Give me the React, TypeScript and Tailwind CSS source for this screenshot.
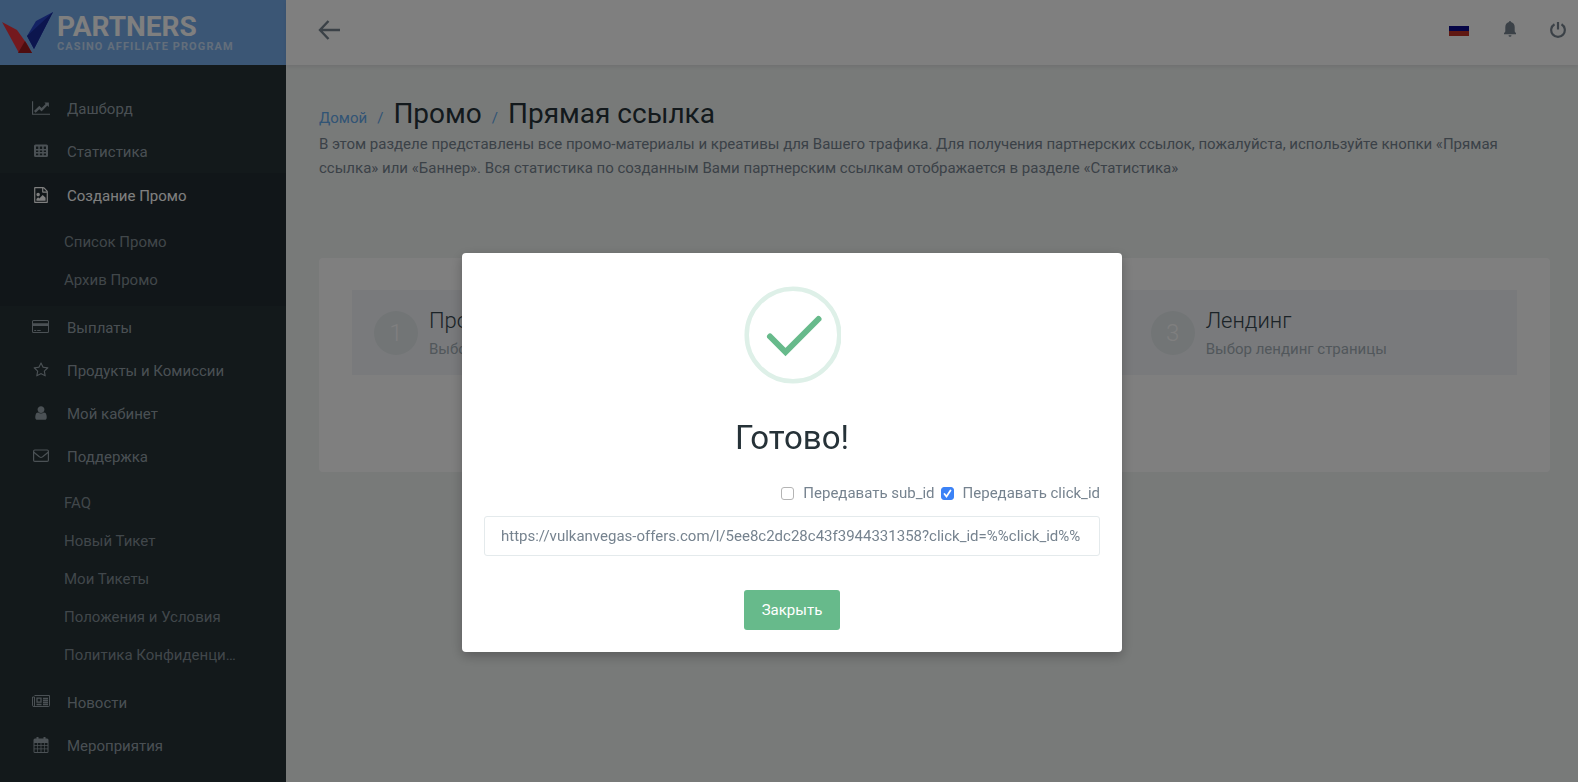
import type { ReactNode } from "react";

type IconProps = { children: ReactNode; viewBox?: string; className?: string };

function Icon({ children, viewBox = "0 0 1792 1792", className = "size-4" }: IconProps) {
  return (
    <svg viewBox={viewBox} className={className} fill="currentColor" aria-hidden="true">
      {children}
    </svg>
  );
}

const icons = {
  chart: (
    <Icon viewBox="0 0 2048 1792" className="h-4 w-[18px]">
      <path d="M2048 1536v128H0V128h128v1408h1920zM1920 288v435q0 21-19.500 29.500T1865 745l-121-121-633 633q-10 10-23 10t-23-10L832 1024l-416 416-192-192 585-585q10-10 23-10t23 10l233 233 464-464-121-121q-16-16-7.500-35.500T1453 256h435q14 0 23 9t9 23z" />
    </Icon>
  ),
  grid: (
    <Icon viewBox="0 0 16 16">
      <path
        fillRule="evenodd"
        d="M2.500 1.500h11A1.500 1.500 0 0 1 15 3v9.500a1.500 1.500 0 0 1-1.500 1.500h-11A1.500 1.500 0 0 1 1 12.500V3a1.500 1.500 0 0 1 1.500-1.500zM3 3.500V6h2.300V3.500zm3.800 0V6h2.400V3.500zm3.900 0V6H13V3.500zM3 7.500V9h2.300V7.500zm3.800 0V9h2.400V7.500zm3.900 0V9H13V7.500zM3 10.400v1.900h2.300v-1.900zm3.800 0v1.900h2.400v-1.900zm3.900 0v1.900H13v-1.900z"
      />
    </Icon>
  ),
  image: (
    <Icon>
      <path d="M1596 380q28 28 48 76t20 88v1152q0 40-28 68t-68 28H224q-40 0-68-28t-28-68V96q0-40 28-68t68-28h896q40 0 88 20t76 48zm-444-244v376h376q-10-29-22-41l-313-313q-12-12-41-22zm384 1528V640h-416q-40 0-68-28t-28-68V128H256v1536h1280zm-128-448v320H384v-192l192-192 128 128 384-384zm-832-192q-80 0-136-56t-56-136 56-136 136-56 136 56 56 136-56 136-136 56z" />
    </Icon>
  ),
  card: (
    <Icon viewBox="0 0 18 16" className="h-4 w-[18px]">
      <path
        fillRule="evenodd"
        d="M1.500 1h14A1.500 1.500 0 0 1 17 2.500v10a1.500 1.500 0 0 1-1.500 1.500h-14A1.500 1.500 0 0 1 0 12.500v-10A1.500 1.500 0 0 1 1.500 1zM1 4.200h15V2.500a.5.5 0 0 0-.5-.5h-14a.5.5 0 0 0-.5.5zM1 7v5.500c0 .3.200.500.500.500h14c.3 0 .5-.2.500-.5V7zm1.200 4h2v1h-2zm3 0h3.500v1H5.200z"
      />
    </Icon>
  ),
  star: (
    <Icon>
      <path d="M1201 1004l306-297-422-62-189-382-189 382-422 62 306 297-73 421 378-199 377 199zm527-357q0 22-26 48l-363 354 86 500q1 7 1 20 0 50-41 50-19 0-40-12l-449-236-449 236q-22 12-40 12-21 0-31.500-14.500t-10.500-35.500q0-6 2-20l86-500L90 695q-25-27-25-48 0-37 56-46l502-73L848 73q19-41 49-41t49 41l225 455 502 73q56 9 56 46z" />
    </Icon>
  ),
  user: (
    <Icon>
      <path d="M1536 1399q0 109-62.500 187t-150.500 78h-854q-88 0-150.500-78T256 1399q0-85 8.500-160.500t31.500-152 58.500-131 94-89T583 832q131 128 313 128t313-128q76 0 134.500 34.500t94 89 58.500 131 31.500 152 8.500 160.500zm-256-887q0 159-112.500 271.500T896 896 624.500 783.500 512 512t112.500-271.500T896 128t271.500 112.500T1280 512z" />
    </Icon>
  ),
  mail: (
    <Icon viewBox="0 0 16 16">
      <g fill="none" stroke="currentColor" strokeWidth="1.200">
        <rect x=".6" y="2" width="14.800" height="11.400" rx="1.200" />
        <path d="M.8 4.300c2 1.800 4 3.200 5.700 4.600 1 .8 2 .8 3 0 1.700-1.400 3.700-2.800 5.700-4.600" />
      </g>
    </Icon>
  ),
  news: (
    <Icon viewBox="0 0 18 16" className="h-4 w-[18px]">
      <g fill="none" stroke="currentColor">
        <path d="M2.500 1.500h15v10a1 1 0 0 1-1 1H1.800A1.300 1.300 0 0 1 .5 11.200V3h2v8.200a1 1 0 0 1-1 1.300" />
        <path strokeWidth="1.300" d="M5 4.200h4v4H5zM11 4.500h5M11 6.500h5M11 8.500h5M4.500 10.500H9.500M11 10.500h5" />
      </g>
    </Icon>
  ),
  calendar: (
    <Icon viewBox="0 0 16 16">
      <path
        fillRule="evenodd"
        d="M3.500 0h2v1.500h5V0h2v1.500H14A1.500 1.500 0 0 1 15.500 3v11.500A1.500 1.500 0 0 1 14 16H2a1.500 1.500 0 0 1-1.500-1.500V3A1.500 1.500 0 0 1 2 1.500h1.500zM1.500 6v2.200h2.500V6zm3.200 0v2.200h2.900V6zm3.700 0v2.200h2.900V6zM12 6v2.200h2.500V6zM1.500 9v2.500h2.500V9zm3.200 0v2.500h2.900V9zm3.700 0v2.500h2.900V9zM12 9v2.500h2.500V9zM1.500 12.300V15h2.500v-2.700zm3.200 0V15h2.900v-2.700zm3.700 0V15h2.900v-2.700zm3.600 0V15h2.500v-2.700z"
      />
    </Icon>
  ),
};

type MenuItem = { label: string; icon: ReactNode; active?: boolean; children?: string[] };

const menu: MenuItem[] = [
  { label: "Дашборд", icon: icons.chart },
  { label: "Статистика", icon: icons.grid },
  { label: "Создание Промо", icon: icons.image, active: true, children: ["Список Промо", "Архив Промо"] },
  { label: "Выплаты", icon: icons.card },
  { label: "Продукты и Комиссии", icon: icons.star },
  { label: "Мой кабинет", icon: icons.user },
  {
    label: "Поддержка",
    icon: icons.mail,
    children: ["FAQ", "Новый Тикет", "Мои Тикеты", "Положения и Условия", "Политика Конфиденци…"],
  },
  { label: "Новости", icon: icons.news },
  { label: "Мероприятия", icon: icons.calendar },
];

const steps = [
  { title: "Продукт", text: "Выбор продукта" },
  { title: "Тип", text: "Выбор типа" },
  { title: "Лендинг", text: "Выбор лендинг страницы" },
];

function Logo() {
  return (
    <a href="#" className="flex h-[65px] items-center bg-[#77acea] pl-0.5 text-white">
      <svg viewBox="0 0 52 42" className="h-[42px] w-[52px]" aria-hidden="true">
        <path fill="#e8323c" d="M0 10l15 8 10 14 5 9H17z" />
        <path fill="#9c1a20" d="M23 29l7 12H16z" />
        <path fill="#2745c8" d="M51 0L34 9l-9 15 7 13z" />
        <path fill="#182a9c" d="M51 0L25 24l7 13z" />
      </svg>
      <span className="flex flex-col pl-[3px]">
        <span className="text-[28px] leading-7 font-bold">PARTNERS</span>
        <span className="text-[11px] leading-3 font-bold tracking-widest text-white/60">CASINO AFFILIATE PROGRAM</span>
      </span>
    </a>
  );
}

function Sidebar() {
  return (
    <aside className="w-[286px] shrink-0 bg-[#263236] text-[#a3afb7]/90">
      <Logo />
      <nav className="pt-[22px]">
        <ul>
          {menu.map((item) => (
            <li key={item.label} className={item.active ? "bg-[#232d32] pt-px" : ""}>
              <a
                href="#"
                className={
                  item.active
                    ? "flex h-[43px] items-center gap-[17px] pt-0.5 pl-8 text-white"
                    : "flex h-[43px] items-center gap-[17px] pt-0.5 pl-8"
                }
              >
                <span className="flex w-[18px] justify-center pb-1">{item.icon}</span>
                {item.label}
              </a>
              {item.children && (
                <ul className="pt-1.5 pb-[7px] text-[#a3afb7]/75">
                  {item.children.map((child) => (
                    <li key={child}>
                      <a href="#" className="block h-[38px] pl-16 leading-[38px]">
                        {child}
                      </a>
                    </li>
                  ))}
                </ul>
              )}
            </li>
          ))}
        </ul>
      </nav>
    </aside>
  );
}

function TopBar() {
  return (
    <header className="flex h-[65px] items-center justify-between bg-white pr-3 pb-1.5 pl-8 text-[#76838f] shadow-[0_2px_4px_rgba(0,0,0,0.08)]">
      <button type="button" aria-label="Назад">
        <svg viewBox="0 0 24 20" className="h-5 w-6" fill="none" stroke="currentColor" strokeWidth="2.400" aria-hidden="true">
          <path d="M10.500 1L2 10l8.500 9M2 10h20" />
        </svg>
      </button>
      <div className="flex items-center">
        <button type="button" aria-label="Язык" className="mr-[34px] flex h-4 w-5 flex-col pt-1">
          <span className="h-[5px] w-full bg-[#0a0a8c]" />
          <span className="h-[5px] w-full bg-[#c03024]" />
        </button>
        <button type="button" aria-label="Уведомления" className="mr-[33px] pb-0.5">
          <svg viewBox="0 0 14 16" className="h-4 w-3.5" fill="currentColor" aria-hidden="true">
            <path d="M7 0a1 1 0 0 1 1 1.100C10.300 1.600 11.700 3.500 11.700 6v4.500l1.300 1.700v1H1v-1l1.300-1.700V6C2.300 3.500 3.700 1.600 6 1.100A1 1 0 0 1 7 0zM5.500 14.200h3a1.500 1.500 0 0 1-3 0z" />
          </svg>
        </button>
        <button type="button" aria-label="Выход">
          <svg viewBox="0 0 16 16" className="size-4" fill="none" stroke="currentColor" strokeWidth="2.200" aria-hidden="true">
            <path d="M4.500 2.200a6.800 6.800 0 1 0 7 0M8 0v7.500" />
          </svg>
        </button>
      </div>
    </header>
  );
}

function Wizard() {
  return (
    <section className="mt-[78px] min-h-[214px] rounded bg-white px-[33px] py-8">
      <ol className="flex bg-[#f3f5f9]">
        {steps.map((step, i) => (
          <li key={step.title} className="flex h-[85px] flex-1 items-center gap-[11px] pl-[22px]">
            <span className="flex size-11 items-center justify-center rounded-full bg-[#e4eaec] text-2xl font-light text-white">
              {i + 1}
            </span>
            <div>
              <h2 className="text-[22px] leading-8 font-light text-[#37474f]">{step.title}</h2>
              <p className="leading-6 text-[#a3afb7]">{step.text}</p>
            </div>
          </li>
        ))}
      </ol>
    </section>
  );
}

function Checkbox({ label, defaultChecked }: { label: string; defaultChecked?: boolean }) {
  return (
    <label className="flex items-center gap-[9px]">
      <span className="relative flex">
        <input
          type="checkbox"
          defaultChecked={defaultChecked}
          className="peer size-[13px] appearance-none rounded-[3px] border border-[#b4b4b4] bg-white checked:border-[#3b82f6] checked:bg-[#3b82f6]"
        />
        <svg
          viewBox="0 0 13 13"
          className="pointer-events-none absolute inset-0 hidden size-[13px] peer-checked:block"
          fill="none"
          stroke="white"
          strokeWidth="1.800"
          strokeLinecap="round"
          aria-hidden="true"
        >
          <path d="M3.500 7l2 2.500 4-6" />
        </svg>
      </span>
      {label}
    </label>
  );
}

function DoneDialog() {
  return (
    <div className="fixed inset-0 flex items-start justify-center bg-black/50 pt-[253px] pl-1.5">
      <div
        role="dialog"
        aria-modal="true"
        aria-labelledby="done-title"
        className="flex w-[660px] flex-col items-center rounded bg-white px-[22px] pt-[33px] pb-[22px] shadow-[0_4px_12px_rgba(0,0,0,0.25)]"
      >
        <svg viewBox="0 0 98 98" className="size-[98px]" fill="none" aria-hidden="true">
          <circle cx="50" cy="49" r="46.300" stroke="#def0e8" strokeWidth="4.500" />
          <path d="M27 50.500l15.500 15.500 33-33" stroke="#67ba8b" strokeWidth="6" strokeLinecap="round" />
        </svg>
        <h1 id="done-title" className="mt-8 text-[33px] leading-[44px] font-normal text-[#263238]">
          Готово!
        </h1>
        <div className="mt-[21px] flex w-full items-center justify-end gap-1.5 leading-6">
          <Checkbox label="Передавать sub_id" />
          <Checkbox label="Передавать click_id" defaultChecked />
        </div>
        <input
          type="text"
          aria-label="Ссылка"
          readOnly
          defaultValue="https://vulkanvegas-offers.com/l/5ee8c2dc28c43f3944331358?click_id=%%click_id%%"
          className="mt-[11px] h-10 w-full rounded-[3px] border border-[#e4eaec] px-4"
        />
        <button type="button" className="mt-[34px] h-10 rounded-[3px] bg-[#67ba8b] px-[18px] font-normal text-white">
          Закрыть
        </button>
      </div>
    </div>
  );
}

export default function App() {
  return (
    <div className="flex min-h-screen bg-[#f1f4f3] font-[Roboto,sans-serif] text-[15px] font-normal text-[#76838f]">
      <Sidebar />
      <div className="min-w-0 flex-1">
        <TopBar />
        <main className="pt-[35px] pr-7 pl-[33px]">
          <nav aria-label="Навигация">
            <ol className="flex items-baseline gap-2.5 leading-7 text-[#62a8ea]">
              <li>
                <a href="#">Домой</a>
              </li>
              <li aria-hidden="true">/</li>
              <li className="text-[28px] font-normal text-[#263238]">Промо</li>
              <li aria-hidden="true">/</li>
              <li className="text-[28px] font-normal text-[#263238]">Прямая ссылка</li>
            </ol>
          </nav>
          <p className="leading-6">
            В этом разделе представлены все промо-материалы и креативы для Вашего трафика. Для получения партнерских
            ссылок, пожалуйста, используйте кнопки «Прямая ссылка» или «Баннер». Вся статистика по созданным Вами
            партнерским ссылкам отображается в разделе «Статистика»
          </p>
          <Wizard />
        </main>
      </div>
      <DoneDialog />
    </div>
  );
}
